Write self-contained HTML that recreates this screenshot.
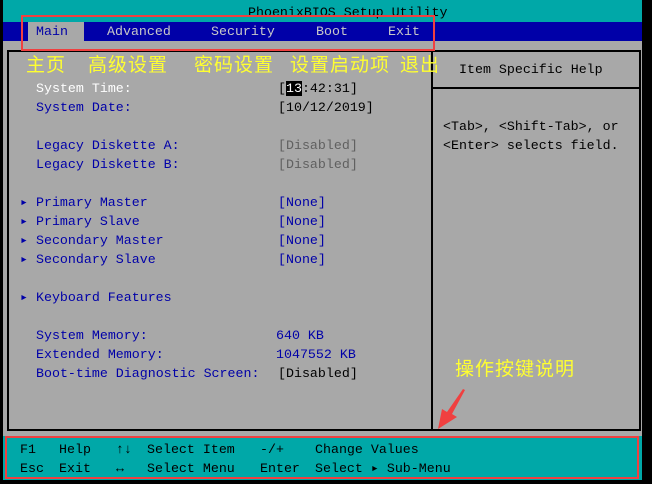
<!DOCTYPE html>
<html><head><meta charset="utf-8"><style>
*{margin:0;padding:0;box-sizing:border-box}
body{width:652px;height:484px;background:#000;position:relative;overflow:hidden;font-family:"Liberation Mono",monospace;font-size:13.3px}
.a{position:absolute;white-space:pre;line-height:19px}
.b{color:#0000a8}.w{color:#fff}.k{color:#000}.y{color:#ffff30;font-family:"Noto Sans CJK SC",sans-serif;font-size:19px;line-height:24px}
</style></head><body>
<div style="position:absolute;left:3px;top:0;width:639px;height:22px;background:#00a8a8"></div>
<div class="a k" style="left:248px;top:3px">PhoenixBIOS Setup Utility</div>
<div style="position:absolute;left:3px;top:22px;width:639px;height:19px;background:#0000a8"></div>
<div style="position:absolute;left:28px;top:22px;width:56px;height:19px;background:#a8a8a8"></div>
<div class="a b" style="left:36px;top:22px">Main</div>
<div class="a" style="left:107px;top:22px;color:#c8c8c8">Advanced</div>
<div class="a" style="left:211px;top:22px;color:#c8c8c8">Security</div>
<div class="a" style="left:316px;top:22px;color:#c8c8c8">Boot</div>
<div class="a" style="left:388px;top:22px;color:#c8c8c8">Exit</div>
<div style="position:absolute;left:3px;top:41px;width:639px;height:395px;background:#a8a8a8"></div>
<div style="position:absolute;left:7px;top:50px;width:634px;height:381px;border:2px solid #000"></div>
<div style="position:absolute;left:431px;top:50px;width:2px;height:381px;background:#000"></div>
<div style="position:absolute;left:431px;top:87px;width:210px;height:2px;background:#000"></div>
<div class="a k" style="left:459px;top:60px">Item Specific Help</div>
<div class="a k" style="left:443px;top:117px">&lt;Tab&gt;, &lt;Shift-Tab&gt;, or
&lt;Enter&gt; selects field.</div>
<div class="a w" style="left:36px;top:79px">System Time:</div>
<div class="a k" style="left:278px;top:79px">[<span style="background:#000;color:#fff">13</span>:42:31]</div>
<div class="a b" style="left:36px;top:98px">System Date:</div>
<div class="a k" style="left:278px;top:98px">[10/12/2019]</div>
<div class="a b" style="left:36px;top:136px">Legacy Diskette A:
Legacy Diskette B:</div>
<div class="a" style="left:278px;top:136px;color:#606060">[Disabled]
[Disabled]</div>
<div class="a b" style="left:20px;top:193px">▸ Primary Master
▸ Primary Slave
▸ Secondary Master
▸ Secondary Slave

▸ Keyboard Features</div>
<div class="a b" style="left:278px;top:193px">[None]
[None]
[None]
[None]</div>
<div class="a b" style="left:36px;top:326px">System Memory:
Extended Memory:
Boot-time Diagnostic Screen:</div>
<div class="a b" style="left:276px;top:326px">640 KB
1047552 KB</div>
<div class="a k" style="left:278px;top:364px">[Disabled]</div>
<div class="a y" style="left:26px;top:52px;letter-spacing:1px">主页</div>
<div class="a y" style="left:88px;top:52px;letter-spacing:1px">高级设置</div>
<div class="a y" style="left:194px;top:52px;letter-spacing:1px">密码设置</div>
<div class="a y" style="left:290px;top:52px;letter-spacing:1px">设置启动项</div>
<div class="a y" style="left:400px;top:52px;letter-spacing:1px">退出</div>
<div class="a y" style="left:455px;top:356px;letter-spacing:1px">操作按键说明</div>
<svg style="position:absolute;left:430px;top:385px" width="40" height="45"><path d="M33 4 L35 5 L22 29 L27 32 L8 44 L12 24 L17 27 Z" fill="#f04040"/></svg>
<div style="position:absolute;left:3px;top:436px;width:639px;height:44px;background:#00a8a8"></div>
<div class="a k" style="left:20px;top:440px">F1
Esc</div>
<div class="a k" style="left:59px;top:440px">Help
Exit</div>
<div class="a k" style="left:116px;top:440px">↑↓
↔</div>
<div class="a k" style="left:147px;top:440px">Select Item
Select Menu</div>
<div class="a k" style="left:260px;top:440px">-/+
Enter</div>
<div class="a k" style="left:315px;top:440px">Change Values
Select ▸ Sub-Menu</div>
<div style="position:absolute;left:21px;top:15px;width:414px;height:36px;border:2px solid #f04040"></div>
<div style="position:absolute;left:5px;top:436px;width:634px;height:43px;border:2px solid #f04040"></div>
</body></html>
